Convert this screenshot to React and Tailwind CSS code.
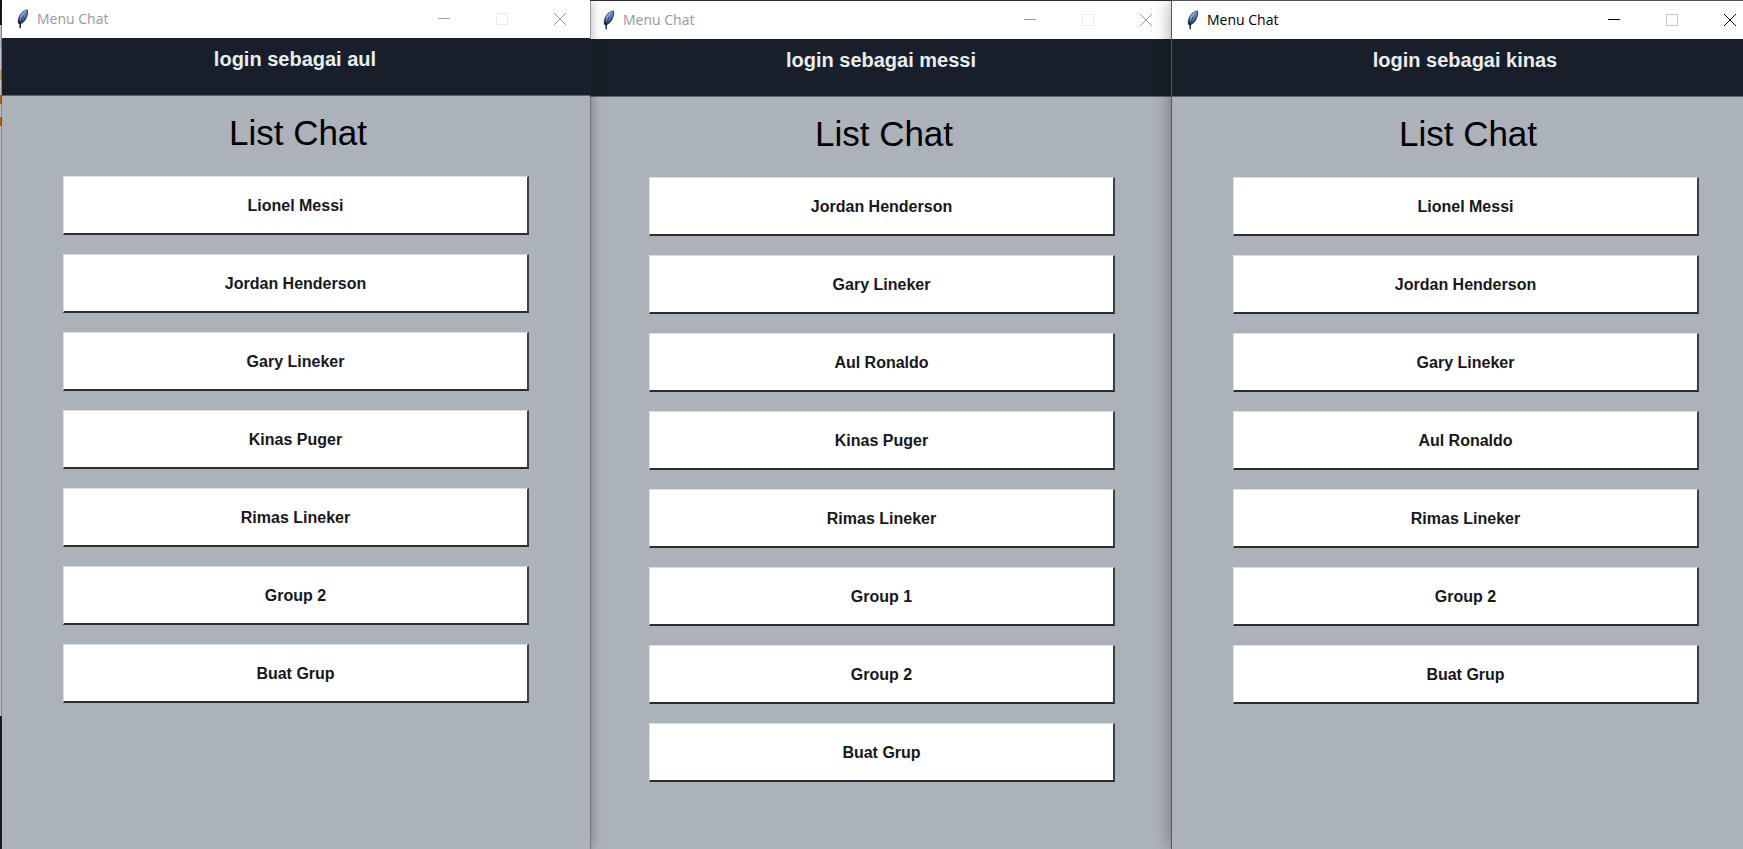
import React from "react";

const WINDOWS = [
  {
    user: "aul",
    active: false,
    place: "z-20",
    chats: ["Lionel Messi", "Jordan Henderson", "Gary Lineker", "Kinas Puger", "Rimas Lineker", "Group 2", "Buat Grup"],
  },
  {
    user: "messi",
    active: false,
    place: "z-10 mt-px -ml-0.5",
    chats: ["Jordan Henderson", "Gary Lineker", "Aul Ronaldo", "Kinas Puger", "Rimas Lineker", "Group 1", "Group 2", "Buat Grup"],
  },
  {
    user: "kinas",
    active: true,
    place: "z-30 mt-px -ml-1",
    chats: ["Lionel Messi", "Jordan Henderson", "Gary Lineker", "Aul Ronaldo", "Rimas Lineker", "Group 2", "Buat Grup"],
  },
];

function Feather() {
  return (
    <svg width="12" height="20" viewBox="0 0 12 20" aria-hidden="true">
      <path d="M10.7 0.4C7.6 0.4 4.4 3 2.4 6.4C0.7 9.4 0.3 12.4 1.2 14.8L3.2 15.6C6.8 14 9.6 10.6 10.6 6.6C11.1 4.4 11.2 2 10.7 0.4Z" fill="#3c434c" />
      <path d="M9.9 1.6C7.4 2.2 4.8 5 3.2 8C2.1 10 1.9 11.8 2.2 13.6C5.2 12 8.5 8.6 9.7 5.2C10.1 3.8 10.2 2.6 9.9 1.6Z" fill="#4f86cd" />
      <path d="M9.4 1.8C7 2.6 4.8 5.2 3.4 8.2" fill="none" stroke="#a4b4c8" strokeWidth="1.3" />
      <path d="M6.4 7.4C4.8 10 3.8 12 3.2 14.4" fill="none" stroke="#1b2c48" strokeWidth="0.9" />
      <path d="M1.6 11.4L3.4 14.2M3.2 13.4V19.2" fill="none" stroke="#14181e" strokeWidth="1.4" />
    </svg>
  );
}

function TitleBar({ active }) {
  const control = "flex h-full w-[58px] items-center justify-center";
  return (
    <div className={`flex h-[38px] items-center bg-white pr-px pl-[15px] ${active ? "text-black" : "text-[#999999]"}`}>
      <Feather />
      <span className="ml-2 flex-1 font-['Open_Sans',sans-serif] text-[14px] leading-5">Menu Chat</span>
      <button type="button" aria-label="Minimize" className={control}>
        <svg width="12" height="12" viewBox="0 0 12 12" shapeRendering="crispEdges">
          <rect x="0" y="5" width="12" height="1" fill="currentColor" />
        </svg>
      </button>
      <button type="button" aria-label="Maximize" disabled className={`${control} ${active ? "text-[#cccccc]" : "text-[#ebebeb]"}`}>
        <svg width="12" height="12" viewBox="0 0 12 12" shapeRendering="crispEdges">
          <path d="M0.5 0.5H11.5V11.5H0.5Z" fill="none" stroke="currentColor" />
        </svg>
      </button>
      <button type="button" aria-label="Close" className={control}>
        <svg width="12" height="12" viewBox="0 0 12 12">
          <path d="M0 0L12 12M12 0L0 12" stroke="currentColor" />
        </svg>
      </button>
    </div>
  );
}

function ChatWindow({ user, active, place, chats }) {
  return (
    <section
      className={`relative flex min-w-0 flex-1 flex-col bg-[#abb2b9] ${place} ${
        active ? "shadow-[0_0_0_1px_#55585b,0_0_18px_rgba(0,0,0,0.4)]" : "shadow-[0_0_0_1px_rgba(60,60,64,0.4),0_0_12px_rgba(0,0,0,0.35)]"
      }`}
    >
      <TitleBar active={active} />
      <header className="h-[58px] border-b border-[#5d636b] bg-[#17202a] pt-[9px] pr-0.5 text-center text-[20px] leading-6 font-bold text-[#eaecee]">
        login sebagai {user}
      </header>
      <main className="flex flex-1 flex-col px-[61px] pt-[15px]">
        <h1 className="mb-[21px] pl-1 text-center text-[35px] leading-[44px] text-black">List Chat</h1>
        <ul className="flex flex-col gap-[19px]">
          {chats.map((chat) => (
            <li key={chat} className="flex">
              <button
                type="button"
                className="h-[59px] flex-1 border-t border-r-2 border-b-2 border-l border-t-[#dcdfe2] border-r-[#3d4043] border-b-[#2c2c2e] border-l-[#dcdfe2] bg-white pt-0.5 text-[16px] leading-6 font-bold text-[#17171c]"
              >
                {chat}
              </button>
            </li>
          ))}
        </ul>
      </main>
    </section>
  );
}

function DesktopEdge() {
  return (
    <div className="flex w-0.5 shrink-0 flex-col bg-[#dcdcdc]" aria-hidden="true">
      <div className="h-[25px] bg-[#111111]" />
      <div className="mt-4 h-[7px] bg-[#b5d3ea]" />
      <div className="mt-[22px] h-[10px] bg-[#dfae7c]" />
      <div className="mt-[15px] h-[9px] bg-[#c77516]" />
      <div className="mt-[13px] h-[9px] bg-[#c77516]" />
      <div className="mt-[590px] flex-1 bg-[#18181a]" />
    </div>
  );
}

export default function App() {
  return (
    <div className="flex min-h-screen overflow-hidden bg-[#2d2b2e] font-['Liberation_Sans',Arial,sans-serif]">
      <DesktopEdge />
      <div className="-mr-[17px] flex min-w-0 flex-1">
        {WINDOWS.map((w) => (
          <ChatWindow key={w.user} {...w} />
        ))}
      </div>
    </div>
  );
}
